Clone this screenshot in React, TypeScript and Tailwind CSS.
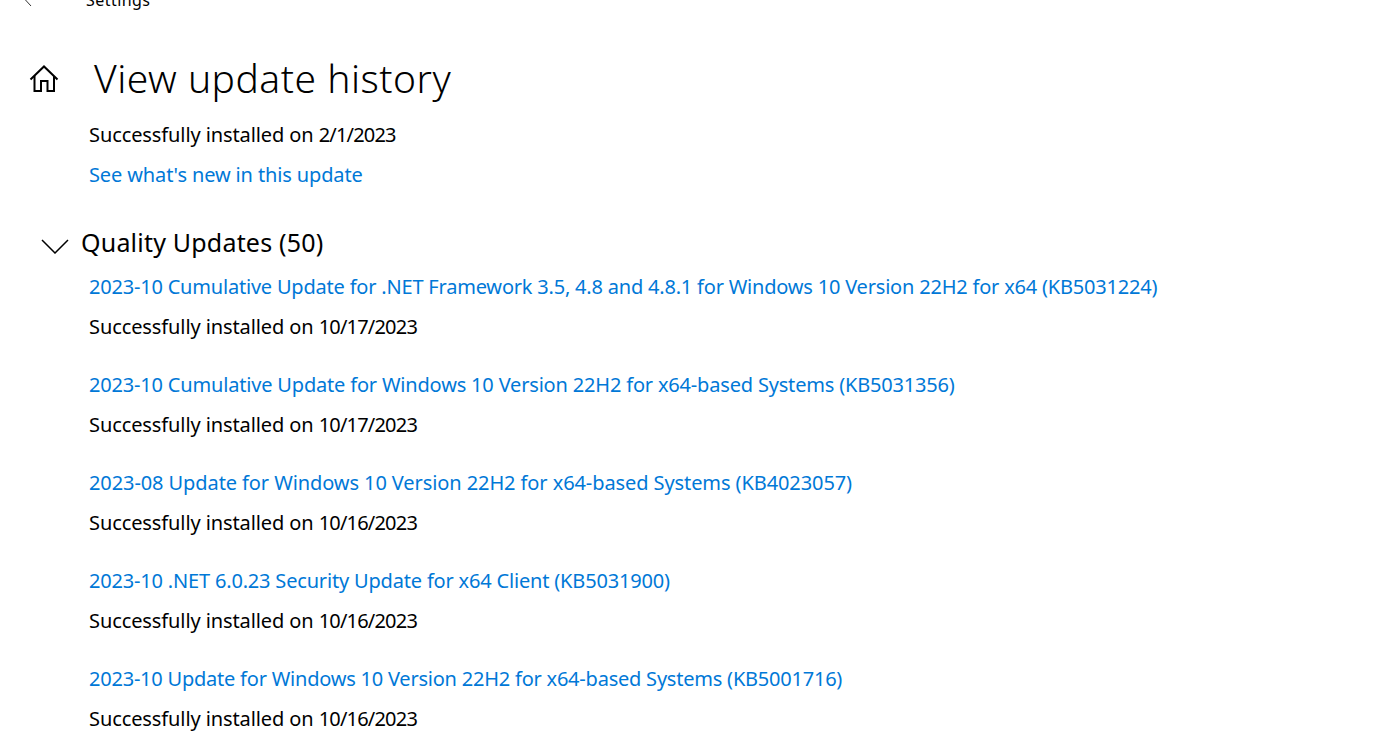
const updates = [
  { title: "2023-10 Cumulative Update for .NET Framework 3.5, 4.8 and 4.8.1 for Windows 10 Version 22H2 for x64 (KB5031224)", date: "10/17/2023", tracking: "tracking-[-0.2px]" },
  { title: "2023-10 Cumulative Update for Windows 10 Version 22H2 for x64-based Systems (KB5031356)", date: "10/17/2023", tracking: "tracking-[-0.18px]" },
  { title: "2023-08 Update for Windows 10 Version 22H2 for x64-based Systems (KB4023057)", date: "10/16/2023", tracking: "tracking-[-0.09px]" },
  { title: "2023-10 .NET 6.0.23 Security Update for x64 Client (KB5031900)", date: "10/16/2023", tracking: "tracking-[-0.18px]" },
  { title: "2023-10 Update for Windows 10 Version 22H2 for x64-based Systems (KB5001716)", date: "10/16/2023", tracking: "tracking-[-0.22px]" },
];

function InstalledOn({ date }: { date: string }) {
  return (
    <p className="text-[20px] leading-[40px] tracking-[-0.1px]">
      Successfully installed on <span className="tracking-[-0.8px]">{date}</span>
    </p>
  );
}

export default function App() {
  return (
    <div className="h-[753px] overflow-hidden bg-white font-['Noto_Sans',sans-serif] text-black">
      <div className="-mt-[12px] flex h-[24px] items-center pl-[24px]">
        <svg width="10" height="14" viewBox="0 0 10 14" fill="none" stroke="#333" strokeWidth="1">
          <path d="M7 1 L1.5 7 L7 13" />
        </svg>
        <span className="ml-[52px] text-[16px] leading-[24px] tracking-[0.45px]">Settings</span>
      </div>

      <div className="mt-[36px] flex h-[60px] items-center pl-[29px]">
        <svg width="30" height="28" viewBox="0 0 30 28" fill="none" stroke="#000" strokeWidth="2" className="mt-[2px]">
          <path d="M1.5 14.5 L15 1.5 L28.500 14.500" />
          <path d="M5.500 11 V26 H12 V16 H18.500 V26 H25 V11" />
        </svg>
        <h1 className="ml-[35px] text-[39px] font-light leading-[60px] tracking-[0.5px]">View update history</h1>
      </div>

      <div className="pl-[89px]">
        <div className="mt-[7px]">
          <InstalledOn date="2/1/2023" />
        </div>
        <a className="block text-[20px] leading-[40px] tracking-[-0.13px] text-[#0078d7]">See what's new in this update</a>
      </div>

      <div className="mt-[27px] flex h-[40px] items-center pl-[41px]">
        <svg width="28" height="16" viewBox="0 0 28 16" fill="none" stroke="#000" strokeWidth="1.500" className="mt-[7px]">
          <path d="M1 2 L14 15 L27 2" />
        </svg>
        <h2 className="ml-[12px] text-[25px] font-normal leading-[40px] tracking-[0.2px]">Quality Updates (50)</h2>
      </div>

      <div className="mt-[5px] flex flex-col gap-[18px] pl-[89px]">
        {updates.map((u) => (
          <div key={u.title}>
            <a className={`block text-[20px] leading-[40px] text-[#0078d7] ${u.tracking}`}>{u.title}</a>
            <InstalledOn date={u.date} />
          </div>
        ))}
      </div>
    </div>
  );
}
